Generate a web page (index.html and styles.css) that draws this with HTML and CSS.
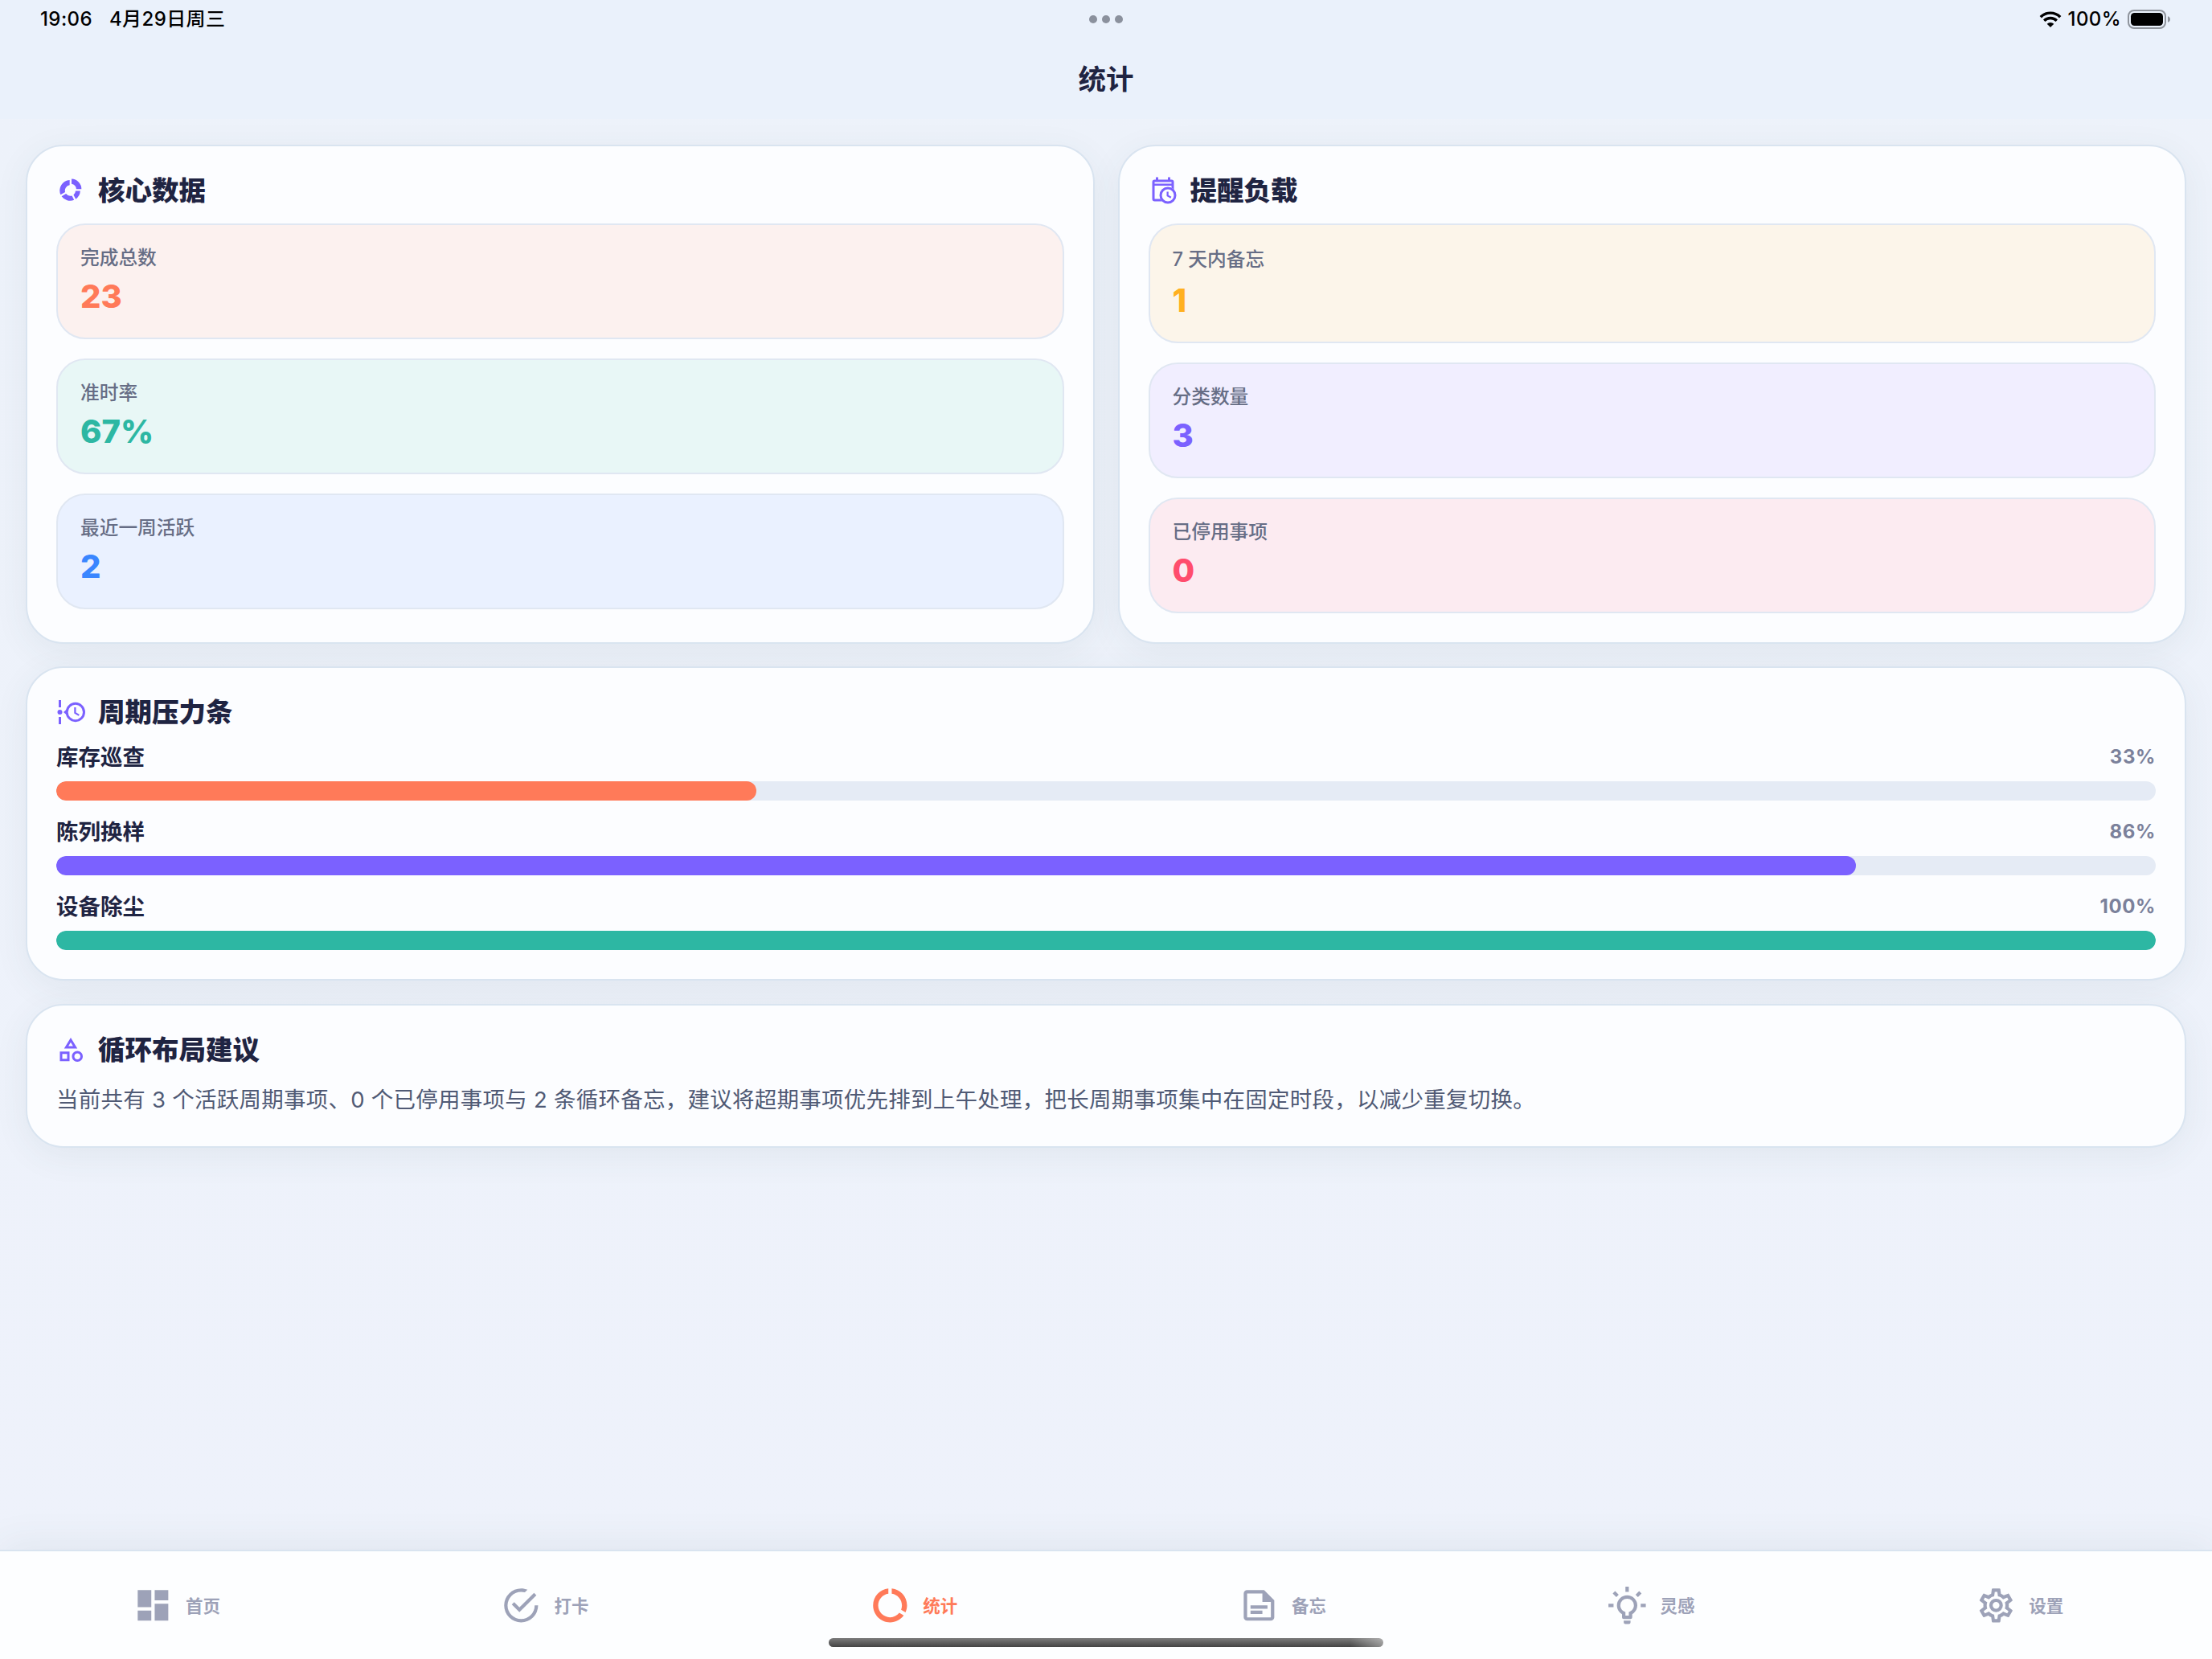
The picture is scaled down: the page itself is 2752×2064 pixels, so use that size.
FILE: index.html
```html
<!doctype html>
<html lang="zh-CN">
  <head>
    <meta charset="utf-8">
    <meta name="viewport" content="width=device-width, initial-scale=1">
    <title>统计</title>
    <link rel="stylesheet" href="styles.css">
  </head>
  <body>

  <header class="header">
    <div class="status-bar">
      <div class="status-left">
        <span>19:06</span>
        <span class="date">4月29日周三</span>
      </div>
      <div class="dots"><i></i><i></i><i></i></div>
      <div class="status-right">
        <svg class="wifi" viewBox="0 0 28 20">
          <path d="M1.8 7.2a17.3 17.3 0 0 1 24.4 0M6.2 11.8a11 11 0 0 1 15.6 0" fill="none" stroke="#000" stroke-width="3.4"/>
          <path d="M14 20l-4.3-4.3a6.1 6.1 0 0 1 8.6 0z"/>
        </svg>
        <span class="battery-text">100%</span>
        <svg class="battery" viewBox="0 0 54 24">
          <rect x="1" y="1" width="46" height="22" rx="7" fill="none" stroke="#8f949c" stroke-width="2"/>
          <rect x="4" y="4" width="40" height="16" rx="4.5"/>
          <path d="M50 8.2c2 .6 3 2 3 3.8s-1 3.2-3 3.8z" fill="#8f949c"/>
        </svg>
      </div>
    </div>
    <h1>统计</h1>
  </header>

  <main>
    <div class="columns">
      <section class="card">
        <h2 class="card-title">
          <svg viewBox="0 0 24 24"><path d="M12.7 2.4A8.4 8.4 0 0 1 20.9 10.9H16.6A4.3 4.3 0 0 0 12.7 6.5zM11.1 3.3V7.5A4.6 4.6 0 0 0 7.4 13.4L3.6 15.5A8.7 8.7 0 0 1 11.1 3.3zM4.4 16.8L8.1 14.7A4.6 4.6 0 0 0 13 16.3L14.8 19.9A8.7 8.7 0 0 1 4.4 16.8zM16 12.4H19.9A8.7 8.7 0 0 1 16.2 19.1L14.3 15.7A4.6 4.6 0 0 0 16 12.4z"/></svg>
          核心数据
        </h2>
        <div class="stats">
          <div class="stat coral">
            <div class="label">完成总数</div>
            <div class="value">23</div>
          </div>
          <div class="stat green">
            <div class="label">准时率</div>
            <div class="value">67%</div>
          </div>
          <div class="stat blue">
            <div class="label">最近一周活跃</div>
            <div class="value">2</div>
          </div>
        </div>
      </section>

      <section class="card">
        <h2 class="card-title">
          <svg viewBox="0 0 24 24">
            <path d="M15,13H16.5V15.82L18.94,17.23L18.19,18.53L15,16.69V13Z"/>
            <path fill-rule="evenodd" d="M6,1H8V3H16V1H18V3H19A2,2 0 0,1 21,5V11.1L19,9.67V8H5V19H9.67L11.1,21H5A2,2 0 0,1 3,19V5A2,2 0 0,1 5,3H6V1M5,5V6.3H19V5H5Z"/>
            <circle cx="16" cy="16" r="6" fill="none" stroke="currentColor" stroke-width="2"/>
          </svg>
          提醒负载
        </h2>
        <div class="stats">
          <div class="stat amber tall">
            <div class="label">7 天内备忘</div>
            <div class="value">1</div>
          </div>
          <div class="stat purple">
            <div class="label">分类数量</div>
            <div class="value">3</div>
          </div>
          <div class="stat red">
            <div class="label">已停用事项</div>
            <div class="value">0</div>
          </div>
        </div>
      </section>
    </div>

    <section class="card">
      <h2 class="card-title">
        <svg viewBox="0 0 24 24">
          <path d="M2 2h2v6H2zM2 16h2v6H2zM6 12l3-2.7v5.4z"/>
          <circle cx="3" cy="12" r="2"/>
          <circle cx="15.9" cy="12" r="7.1" fill="none" stroke="currentColor" stroke-width="2"/>
          <path d="M15.600 8v4.600l3.300 2" fill="none" stroke="currentColor" stroke-width="1.5"/>
        </svg>
        周期压力条
      </h2>
      <div class="bars">
        <div class="bar-row">
          <div class="bar-head"><span>库存巡查</span><span class="percent">33%</span></div>
          <div class="track"><div class="fill coral-fill" style="width: 33.33%"></div></div>
        </div>
        <div class="bar-row">
          <div class="bar-head"><span>陈列换样</span><span class="percent">86%</span></div>
          <div class="track"><div class="fill purple-fill" style="width: 85.71%"></div></div>
        </div>
        <div class="bar-row">
          <div class="bar-head"><span>设备除尘</span><span class="percent">100%</span></div>
          <div class="track"><div class="fill green-fill" style="width: 100%"></div></div>
        </div>
      </div>
    </section>

    <section class="card">
      <h2 class="card-title">
        <svg viewBox="0 0 24 24"><path d="M12 2l-5.5 9h11L12 2zm0 3.84L13.93 9h-3.87L12 5.84zM17.5 13c-2.49 0-4.5 2.01-4.5 4.5s2.01 4.5 4.5 4.5 4.5-2.01 4.5-4.5-2.01-4.5-4.5-4.5zm0 7c-1.38 0-2.5-1.12-2.5-2.5s1.12-2.5 2.5-2.5 2.5 1.12 2.5 2.5-1.12 2.5-2.5 2.5zM3 21.5h8v-8H3v8zm2-6h4v4H5v-4z"/></svg>
        循环布局建议
      </h2>
      <p class="advice">当前共有 3 个活跃周期事项、0 个已停用事项与 2 条循环备忘，建议将超期事项优先排到上午处理，把长周期事项集中在固定时段，以减少重复切换。</p>
    </section>
  </main>

  <nav class="tab-bar">
    <a class="tab">
      <svg viewBox="0 0 24 24"><path d="M3 13h8V3H3v10zm0 8h8v-6H3v6zm10 0h8V11h-8v10zm0-18v6h8V3h-8z"/></svg>
      首页
    </a>
    <a class="tab">
      <svg viewBox="0 0 24 24"><path d="M20,12A8,8 0 0,1 12,20A8,8 0 0,1 4,12A8,8 0 0,1 12,4C12.76,4 13.5,4.11 14.2,4.31L15.77,2.74C14.61,2.26 13.34,2 12,2A10,10 0 0,0 2,12A10,10 0 0,0 12,22A10,10 0 0,0 22,12M7.91,10.08L6.5,11.5L11,16L21,6L19.59,4.58L11,13.17L7.91,10.08Z"/></svg>
      打卡
    </a>
    <a class="tab active">
      <svg viewBox="0 0 24 24"><path d="M13 2.05v3.03c3.39.49 6 3.39 6 6.92 0 .9-.18 1.75-.48 2.54l2.6 1.53c.56-1.24.88-2.62.88-4.07 0-5.18-3.95-9.45-9-9.95zM12 19c-3.87 0-7-3.13-7-7 0-3.53 2.61-6.43 6-6.92V2.05c-5.06.5-9 4.76-9 9.95 0 5.52 4.47 10 9.99 10 3.31 0 6.24-1.61 8.06-4.09l-2.6-1.53C16.17 17.98 14.21 19 12 19z"/></svg>
      统计
    </a>
    <a class="tab">
      <svg viewBox="0 0 24 24"><path d="M15,3H5A2,2 0 0,0 3,5V19A2,2 0 0,0 5,21H19A2,2 0 0,0 21,19V9L15,3M19,19H5V5H14V10H19V19M17,14H7V12H17V14M14,17H7V15H14V17Z"/></svg>
      备忘
    </a>
    <a class="tab">
      <svg viewBox="0 0 24 24"><path d="M20,11H23V13H20V11M1,11H4V13H1V11M13,1V4H11V1H13M4.92,3.5L7.05,5.64L5.63,7.05L3.5,4.93L4.92,3.5M16.95,5.63L19.07,3.5L20.5,4.93L18.37,7.05L16.95,5.63M12,6A6,6 0 0,1 18,12C18,14.22 16.79,16.16 15,17.2V19A1,1 0 0,1 14,20H10A1,1 0 0,1 9,19V17.2C7.21,16.16 6,14.22 6,12A6,6 0 0,1 12,6M14,21V22A1,1 0 0,1 13,23H11A1,1 0 0,1 10,22V21H14M11,18H13V15.87C14.73,15.43 16,13.86 16,12A4,4 0 0,0 12,8A4,4 0 0,0 8,12C8,13.86 9.27,15.43 11,15.87V18Z"/></svg>
      灵感
    </a>
    <a class="tab">
      <svg viewBox="0 0 24 24"><path d="M12,8A4,4 0 0,1 16,12A4,4 0 0,1 12,16A4,4 0 0,1 8,12A4,4 0 0,1 12,8M12,10A2,2 0 0,0 10,12A2,2 0 0,0 12,14A2,2 0 0,0 14,12A2,2 0 0,0 12,10M10,22C9.75,22 9.54,21.82 9.5,21.58L9.13,18.93C8.5,18.68 7.96,18.34 7.44,17.94L4.95,18.95C4.73,19.03 4.46,18.95 4.34,18.73L2.34,15.27C2.21,15.05 2.27,14.78 2.46,14.63L4.57,12.97L4.5,12L4.57,11L2.46,9.37C2.27,9.22 2.21,8.95 2.34,8.73L4.34,5.27C4.46,5.05 4.73,4.96 4.95,5.05L7.44,6.05C7.96,5.66 8.5,5.32 9.13,5.07L9.5,2.42C9.54,2.18 9.75,2 10,2H14C14.25,2 14.46,2.18 14.5,2.42L14.87,5.07C15.5,5.32 16.04,5.66 16.56,6.05L19.05,5.05C19.27,4.96 19.54,5.05 19.66,5.27L21.66,8.73C21.79,8.95 21.73,9.22 21.54,9.37L19.43,11L19.5,12L19.43,13L21.54,14.63C21.73,14.78 21.79,15.05 21.66,15.27L19.66,18.73C19.54,18.95 19.27,19.04 19.05,18.95L16.56,17.95C16.04,18.34 15.5,18.68 14.87,18.93L14.5,21.58C14.46,21.82 14.25,22 14,22H10M11.25,4L10.88,6.61C9.68,6.86 8.62,7.5 7.85,8.39L5.44,7.35L4.69,8.65L6.8,10.2C6.4,11.37 6.4,12.64 6.8,13.8L4.68,15.36L5.43,16.66L7.86,15.62C8.63,16.5 9.68,17.14 10.87,17.38L11.24,20H12.76L13.13,17.39C14.32,17.14 15.37,16.5 16.14,15.62L18.57,16.66L19.32,15.36L17.2,13.81C17.6,12.64 17.6,11.37 17.2,10.2L19.31,8.65L18.56,7.35L16.15,8.39C15.38,7.5 14.32,6.86 13.12,6.62L12.75,4H11.25Z"/></svg>
      设置
    </a>
    <div class="home-indicator"></div>
  </nav>

  </body>
</html>
```
FILE: styles.css
```css
* {
  box-sizing: border-box;
}

body {
  margin: 0;
  height: 2064px;
  display: flex;
  flex-direction: column;
  overflow: hidden;
  background: linear-gradient(#edf2fa, #eef2fb);
  color: #1f2442;
  font-family: Inter, "Noto Sans CJK SC", sans-serif;
}

h1, h2, p {
  margin: 0;
}

svg {
  fill: currentColor;
  flex: none;
}

/* header */

.header {
  height: 148px;
  flex: none;
  background: #eaf1fb;
}

.status-bar {
  display: grid;
  grid-template-columns: 1fr auto 1fr;
  align-items: center;
  height: 48px;
  padding: 0 51px 0 50px;
  color: #000;
  font-size: 24px;
  font-weight: 500;
  line-height: 48px;
}

.status-left {
  display: flex;
  gap: 21px;
  letter-spacing: 0.4px;
}

.dots {
  display: flex;
  gap: 6px;
}

.dots i {
  width: 10px;
  height: 10px;
  border-radius: 50%;
  background: #8b919d;
}

.status-right {
  display: flex;
  justify-content: flex-end;
  align-items: center;
}

.wifi {
  width: 28px;
  height: 20px;
}

.battery-text {
  margin: 0 8px 0 8px;
  letter-spacing: 0.4px;
}

.battery {
  width: 54px;
  height: 24px;
}

h1 {
  font-size: 34.5px;
  font-weight: 700;
  line-height: 102px;
  text-align: center;
}

/* cards */

main {
  flex: 1;
  display: flex;
  flex-direction: column;
  gap: 28.5px;
  padding: 32px 32px 0;
}

.columns {
  display: grid;
  grid-template-columns: 1fr 1fr;
  gap: 29px;
}

.card {
  padding: 35px 36px 36px;
  border: 2px solid #d9e4f0;
  border-radius: 47px;
  background: #fcfdff;
  box-shadow: 0 10px 44px rgba(50, 80, 90, 0.07);
}

.card-title {
  display: flex;
  align-items: center;
  gap: 16px;
  height: 40px;
  margin-bottom: 21px;
  font-size: 33.5px;
  font-weight: 800;
  line-height: 40px;
}

.card-title svg {
  width: 36px;
  height: 36px;
  color: #7b61ff;
}

.stats {
  display: flex;
  flex-direction: column;
  gap: 24px;
}

.stat {
  height: 144px;
  padding: 26px 28px;
  border: 2px solid #e0e7f2;
  border-radius: 36px;
}

.label {
  margin-bottom: 8px;
  color: #666d85;
  font-size: 23.7px;
  font-weight: 500;
  line-height: 29px;
}

.value {
  font-size: 40px;
  font-weight: 800;
  line-height: 52px;
}

.tall {
  height: 148.5px;
}

.tall .label {
  line-height: 33.5px;
}

.coral { background: #fcf1ef; }
.coral .value { color: #ff7a59; }
.green { background: #e8f7f6; }
.green .value { color: #2db7a3; }
.blue { background: #eaf1ff; }
.blue .value { color: #3a86ff; }
.amber { background: #fcf5ea; }
.amber .value { color: #ffb020; }
.purple { background: #f1eeff; }
.purple .value { color: #7b61ff; }
.red { background: #fcebf1; }
.red .value { color: #ff4d6d; }

/* progress bars */

.bars {
  display: flex;
  flex-direction: column;
  gap: 21px;
  margin-top: -3px;
}

.bar-head {
  display: flex;
  justify-content: space-between;
  height: 36px;
  margin-bottom: 12px;
  font-size: 27.5px;
  font-weight: 700;
  line-height: 36px;
}

.percent {
  color: #7b819b;
  font-size: 24px;
  letter-spacing: 0.6px;
}

.track {
  height: 24px;
  border-radius: 12px;
  background: #e5ebf5;
  overflow: hidden;
}

.fill {
  height: 100%;
  border-radius: 12px;
}

.coral-fill { background: #ff7a59; }
.purple-fill { background: #7b61ff; }
.green-fill { background: #2db7a3; }

.advice {
  color: #505a75;
  font-size: 27.5px;
  letter-spacing: 0.25px;
  line-height: 43.5px;
}

/* bottom tabs */

.tab-bar {
  position: relative;
  display: flex;
  flex: none;
  height: 136px;
  border-top: 2px solid #d9e4f0;
  background: #fdfeff;
  box-shadow: 0 -8px 44px rgba(50, 80, 90, 0.07);
}

.tab {
  flex: 1;
  display: flex;
  justify-content: center;
  align-items: center;
  gap: 15.5px;
  padding: 0 20px 2px 0;
  color: #9da2b8;
  font-size: 21.5px;
  font-weight: 700;
}

.tab svg {
  width: 50.7px;
  height: 50.7px;
  margin-top: 2px;
}

.active {
  color: #ff7a59;
}

.home-indicator {
  position: absolute;
  bottom: 15px;
  left: 50%;
  width: 690px;
  height: 11px;
  margin-left: -345px;
  border-radius: 6px;
  background: linear-gradient(90deg, transparent 94%, rgba(255, 255, 255, 0.4)), linear-gradient(#7c7c7c, #444);
}
```
